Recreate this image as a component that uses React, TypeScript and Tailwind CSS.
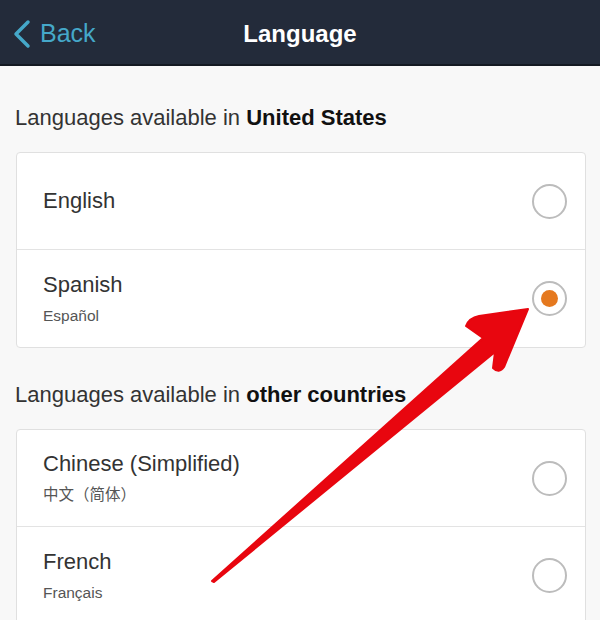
const font = "font-['Liberation_Sans','Noto_Sans_CJK_SC',sans-serif]"

type Lang = { name: string; native?: string; selected?: boolean }

const usLanguages: Lang[] = [
  { name: 'English' },
  { name: 'Spanish', native: 'Español', selected: true },
]

const otherLanguages: Lang[] = [
  { name: 'Chinese (Simplified)', native: '中文（简体）' },
  { name: 'French', native: 'Français' },
]

function Radio({ checked }: { checked?: boolean }) {
  return (
    <div className="w-[35px] h-[35px] rounded-full border-2 border-[#bcbcbc] bg-white flex items-center justify-center shrink-0">
      {checked && <div className="w-[17px] h-[17px] rounded-full bg-[#e5791f]" />}
    </div>
  )
}

function LanguageRow({ lang, last }: { lang: Lang; last?: boolean }) {
  return (
    <div
      className={`h-[97px] flex items-center justify-between pl-[26px] pr-[18px] ${
        last ? '' : 'border-b border-[#e3e3e3]'
      }`}
    >
      <div>
        <p className="text-[22px] leading-[26px] text-[#333]">{lang.name}</p>
        {lang.native && <p className="text-[15.5px] leading-[20px] text-[#555] mt-[8px]">{lang.native}</p>}
      </div>
      <Radio checked={lang.selected} />
    </div>
  )
}

function Section({ where, langs, top }: { where: string; langs: Lang[]; top: string }) {
  return (
    <div className={top}>
      <p className="px-[15px] text-[22px] leading-[26px] text-[#333]">
        Languages available in <span className="font-bold text-[#111]">{where}</span>
      </p>
      <div className="ml-[16px] mr-[14px] mt-[21px] bg-white border border-[#e0e0e0] rounded-[4px]">
        {langs.map((l, i) => (
          <LanguageRow key={l.name} lang={l} last={i === langs.length - 1} />
        ))}
      </div>
    </div>
  )
}

export default function App() {
  return (
    <div className={`${font} relative w-[600px] h-[620px] overflow-hidden bg-[#f8f8f8]`}>
      {/* Nav bar */}
      <div className="h-[66px] pt-[3px] bg-[#232b3a] border-b-2 border-[#141922] flex items-center relative">
        <div className="flex items-center pl-[12px] gap-[8px] text-[#45a8c9]">
          <svg width="20" height="30" viewBox="0 0 20 30" fill="none">
            <path d="M16 3L4 15l12 12" stroke="#45a8c9" strokeWidth="3.5" strokeLinecap="round" strokeLinejoin="round" />
          </svg>
          <span className="text-[25px] leading-none">Back</span>
        </div>
        <span className="absolute left-0 right-0 text-center text-white font-bold text-[24px] leading-none pointer-events-none">
          Language
        </span>
      </div>

      <Section where="United States" langs={usLanguages} top="pt-[39px]" />
      <Section where="other countries" langs={otherLanguages} top="pt-[34px]" />

      {/* Annotation arrow */}
      <svg className="absolute inset-0 pointer-events-none" width="600" height="620" viewBox="0 0 600 620">
        <path
          d="M212 581 L483 338 L466 326 Q469 318 479 316 L528 309 L504 367 Q499 374 493 368 L495 352 L214 582 Z"
          fill="#e8060f"
          stroke="#e8060f"
          strokeWidth="2"
          strokeLinejoin="round"
        />
      </svg>
    </div>
  )
}
